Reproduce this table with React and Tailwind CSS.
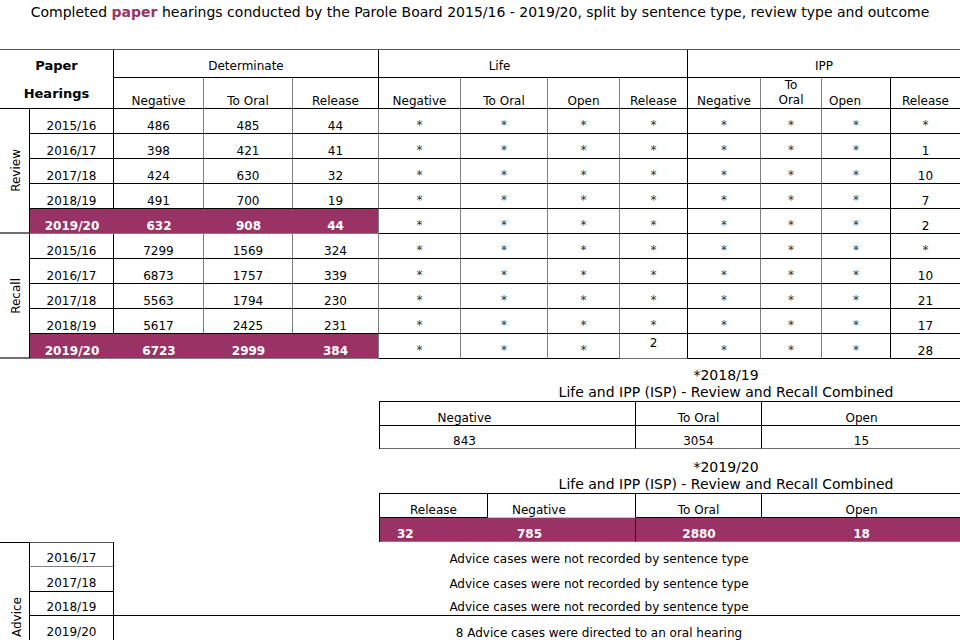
import React from "react";

const cellBase =
  "flex items-end justify-center border-r border-b border-r-[#7f7f7f] border-b-black leading-[14px]";
const purple =
  "flex items-end justify-center border-b border-b-[#7f7f7f] bg-[#993366] text-white font-bold leading-[14px]";

const review = [
  ["2015/16", "486", "485", "44", "*"],
  ["2016/17", "398", "421", "41", "1"],
  ["2017/18", "424", "630", "32", "10"],
  ["2018/19", "491", "700", "19", "7"],
  ["2019/20", "632", "908", "44", "2"],
];
const recall = [
  ["2015/16", "7299", "1569", "324", "*"],
  ["2016/17", "6873", "1757", "339", "10"],
  ["2017/18", "5563", "1794", "230", "21"],
  ["2018/19", "5617", "2425", "231", "17"],
  ["2019/20", "6723", "2999", "384", "28"],
];

function Star() {
  return <span className="text-[#333] pb-[1px]">*</span>;
}

function DataRow({ row, last, lifeRelease, isLast }) {
  const [year, a, b, c, ipp] = row;
  const bottom = isLast ? "border-b-[#6f6f6f]" : "";
  return (
    <>
      {last ? (
        <>
          <div className={purple}>{year}</div>
          <div className={purple}>{a}</div>
          <div className={purple}>{b}</div>
          <div className={purple + " border-r border-r-[#7f7f7f]"}>{c}</div>
        </>
      ) : (
        <>
          <div className={cellBase + " border-r-black"}>{year}</div>
          <div className={cellBase}>{a}</div>
          <div className={cellBase}>{b}</div>
          <div className={cellBase}>{c}</div>
        </>
      )}
      <div className={cellBase + " " + bottom}><Star /></div>
      <div className={cellBase + " " + bottom}><Star /></div>
      <div className={cellBase + " " + bottom}><Star /></div>
      {lifeRelease ? (
        <div className="flex items-start justify-center border-r border-b border-r-black border-b-[#6f6f6f] leading-[14px] pt-[2px]">
          {lifeRelease}
        </div>
      ) : (
        <div className={cellBase + " border-r-black " + bottom}><Star /></div>
      )}
      <div className={cellBase + " " + bottom}><Star /></div>
      <div className={cellBase + " " + bottom}><Star /></div>
      <div className={cellBase + " border-r-black " + bottom}><Star /></div>
      <div className={cellBase + " border-r-0 " + bottom}>
        {ipp === "*" ? <Star /> : ipp}
      </div>
    </>
  );
}

export default function App() {
  return (
    <div className="w-[960px] h-[640px] overflow-hidden bg-white text-black text-[12px] font-['DejaVu_Sans',sans-serif]">
      {/* Title */}
      <div className="h-[49px] pt-[3px] text-center text-[14px] leading-[18px]">
        Completed <span className="font-bold text-[#993366]">paper</span> hearings conducted by the Parole Board 2015/16 - 2019/20, split by sentence type, review type and outcome
      </div>

      {/* Main table */}
      <div className="grid grid-cols-[30px_84px_90px_89px_86px_82px_87px_72px_68px_73px_61px_69px_69px] grid-rows-[28px_31px_repeat(10,25px)] border-t border-t-[#555]">
        <div className="col-span-2 row-span-2 flex flex-col items-center border-r border-b border-r-black border-b-black pt-[2px] font-bold text-[13px] leading-[28px]">
          <span>Paper</span>
          <span>Hearings</span>
        </div>
        <div className="col-span-3 flex items-center justify-center border-r border-b border-r-black border-b-black pt-[5px]">
          Determinate
        </div>
        <div className="col-span-4 flex items-center border-r border-b border-r-black border-b-black pt-[5px]">
          <span className="w-[241px] text-center">Life</span>
        </div>
        <div className="col-span-4 flex items-center justify-center border-b border-b-black pt-[5px]">
          IPP
        </div>

        <div className={cellBase}>Negative</div>
        <div className={cellBase}>To Oral</div>
        <div className={cellBase + " border-r-black"}>Release</div>
        <div className={cellBase}>Negative</div>
        <div className={cellBase}>To Oral</div>
        <div className={cellBase}>Open</div>
        <div className={cellBase + " border-r-black"}>Release</div>
        <div className={cellBase}>Negative</div>
        <div className="flex flex-col items-center justify-end border-r border-b border-r-[#7f7f7f] border-b-black leading-[15px]">
          <span>To</span>
          <span>Oral</span>
        </div>
        <div className={cellBase + " justify-start pl-[7px] border-r-black"}>Open</div>
        <div className={cellBase + " border-r-0"}>Release</div>

        <div className="row-span-5 flex items-center justify-center border-r border-b border-r-black border-b-[#6f6f6f] border-b-2 pl-[2px]">
          <span className="[writing-mode:vertical-rl] rotate-180">Review</span>
        </div>
        {review.map((r, i) => (
          <DataRow key={"rv" + i} row={r} last={i === 4} isLast={i === 4} />
        ))}

        <div className="row-span-5 flex items-center justify-center border-r border-b border-r-black border-b-[#6f6f6f] border-b-2 pl-[2px]">
          <span className="[writing-mode:vertical-rl] rotate-180">Recall</span>
        </div>
        {recall.map((r, i) => (
          <DataRow
            key={"rc" + i}
            row={r}
            last={i === 4}
            isLast={i === 4}
            lifeRelease={i === 4 ? "2" : null}
          />
        ))}
      </div>

      {/* Combined 2018/19 */}
      <div className="ml-[379px] w-[581px]">
        <div className="mt-[8px] pl-[113px] text-center text-[14px] leading-[17px]">
          <div>*2018/19</div>
          <div>Life and IPP (ISP) - Review and Recall Combined</div>
        </div>
        <div className="grid grid-cols-[256px_126px_199px] grid-rows-[24px_23px] border-t border-l border-black">
          <div className="flex items-end border-r border-b border-black leading-[14px]">
            <span className="w-[169px] text-center">Negative</span>
          </div>
          <div className="flex items-end justify-center border-r border-b border-black leading-[14px]">To Oral</div>
          <div className="flex items-end justify-center border-b border-black leading-[14px]">Open</div>
          <div className="flex items-end border-r border-b border-r-black border-b-[#6f6f6f] leading-[14px]">
            <span className="w-[169px] text-center">843</span>
          </div>
          <div className="flex items-end justify-center border-r border-b border-r-black border-b-[#6f6f6f] leading-[14px]">3054</div>
          <div className="flex items-end justify-center border-b border-b-[#6f6f6f] leading-[14px]">15</div>
        </div>

        {/* Combined 2019/20 */}
        <div className="mt-[10px] pl-[113px] text-center text-[14px] leading-[17px]">
          <div>*2019/20</div>
          <div>Life and IPP (ISP) - Review and Recall Combined</div>
        </div>
        <div className="grid grid-cols-[108px_148px_126px_199px] grid-rows-[24px_24px] border-t border-l border-black">
          <div className="flex items-end justify-center border-r border-b border-black leading-[14px]">Release</div>
          <div className="flex items-end border-r border-b border-r-black border-b-[#d9b3c6] leading-[14px] pl-[24px]">Negative</div>
          <div className="flex items-end justify-center border-r border-b border-black leading-[14px]">To Oral</div>
          <div className="flex items-end justify-center border-b border-black leading-[14px]">Open</div>
          <div className="flex items-end bg-[#993366] text-white font-bold border-b border-b-[#7f7f7f] leading-[14px] pl-[17px]">32</div>
          <div className="flex items-end bg-[#993366] text-white font-bold border-r border-b border-r-black border-b-[#7f7f7f] leading-[14px] pl-[29px]">785</div>
          <div className="flex items-end justify-center bg-[#993366] text-white font-bold border-b border-b-[#7f7f7f] leading-[14px]">2880</div>
          <div className="flex items-end justify-center bg-[#993366] text-white font-bold border-b border-b-[#7f7f7f] leading-[14px]">18</div>
        </div>
      </div>

      {/* Advice */}
      <div className="grid grid-cols-[30px_84px_846px] grid-rows-[25px_25px_24px_25px_25px_25px]">
        <div className="row-span-6 flex items-center justify-center border-t border-r border-black pl-[4px]">
          <span className="[writing-mode:vertical-rl] rotate-180">Advice</span>
        </div>
        <div className="flex items-end justify-center border-t border-r border-b border-t-[#555] border-r-black border-b-[#7f7f7f] leading-[14px] pb-[1px]">2016/17</div>
        <div className="flex items-end justify-center pl-[124px] leading-[14px] pb-[1px]">Advice cases were not recorded by sentence type</div>
        <div className="flex items-end justify-center border-r border-b border-black leading-[14px] pb-[1px]">2017/18</div>
        <div className="flex items-end justify-center pl-[124px] leading-[14px] pb-[1px]">Advice cases were not recorded by sentence type</div>
        <div className="flex items-end justify-center border-r border-b border-black leading-[14px] pb-[1px]">2018/19</div>
        <div className="flex items-end justify-center pl-[124px] border-b border-black leading-[14px] pb-[1px]">Advice cases were not recorded by sentence type</div>
        <div className="flex items-end justify-center border-r border-b border-black leading-[14px] pb-[1px]">2019/20</div>
        <div className="flex items-end justify-center pl-[124px] leading-[14px] pb-[1px]">8 Advice cases were directed to an oral hearing</div>
        <div className="border-r border-black"></div>
        <div></div>
        <div className="border-r border-black"></div>
        <div></div>
      </div>
    </div>
  );
}
